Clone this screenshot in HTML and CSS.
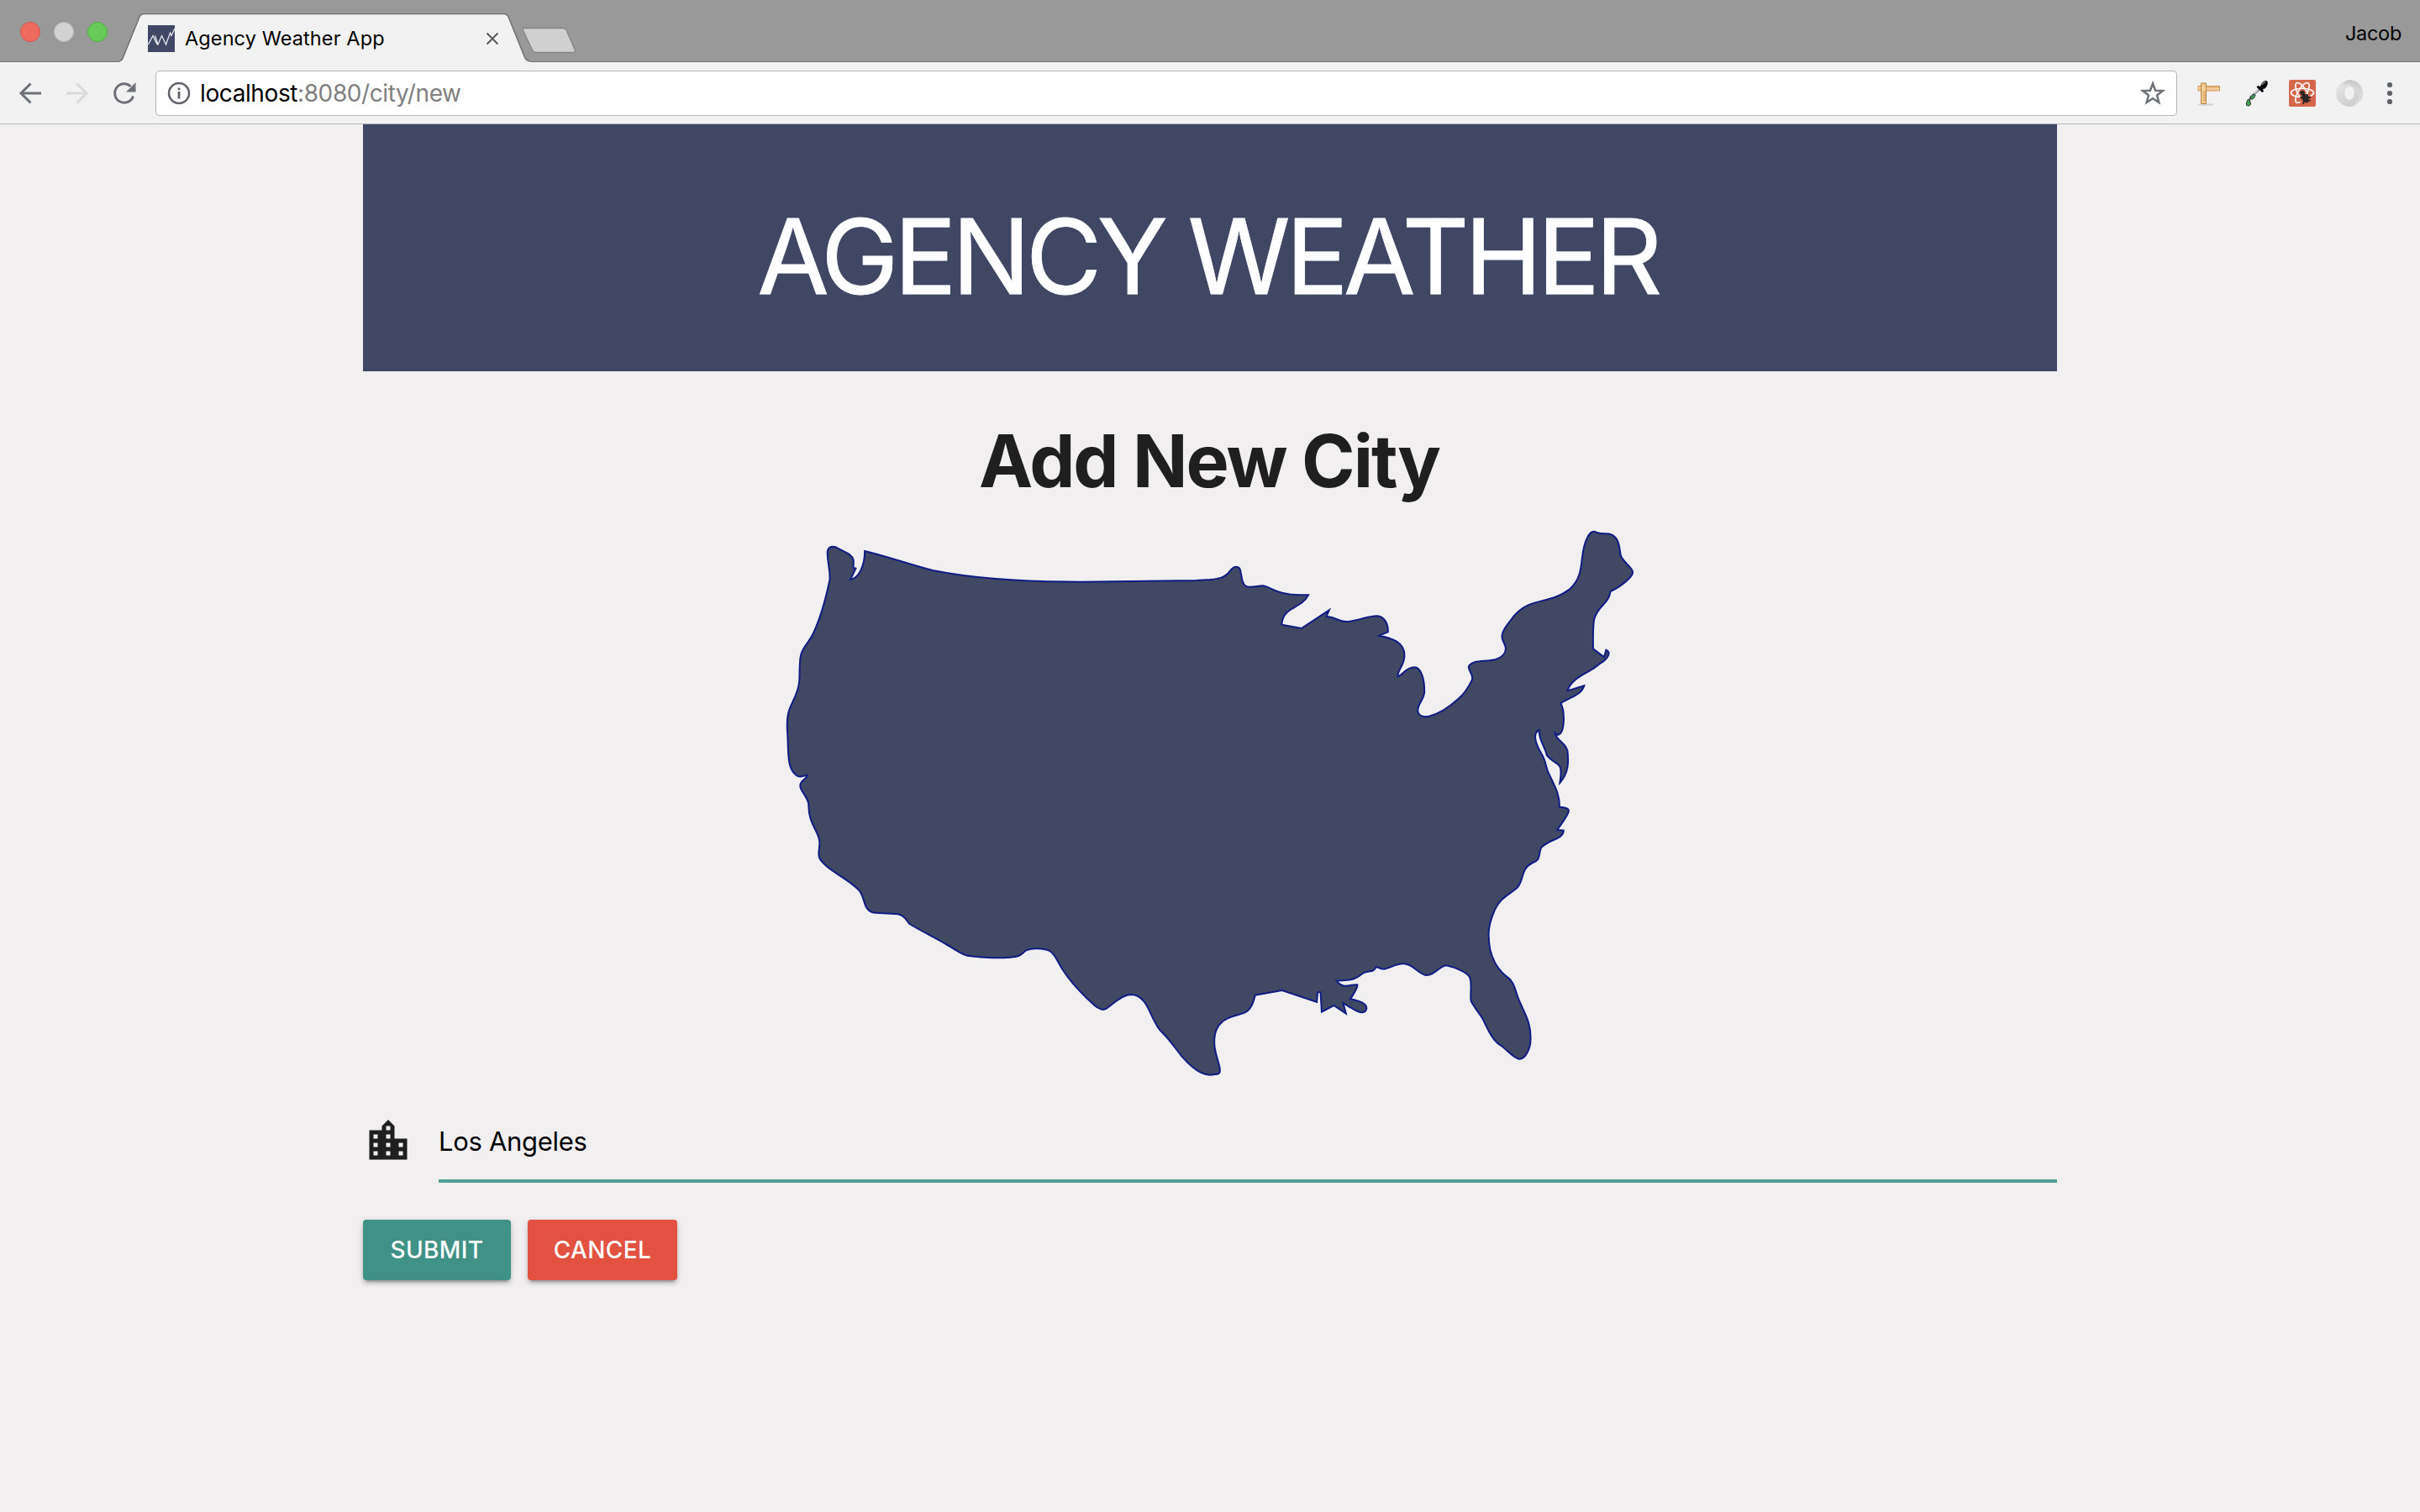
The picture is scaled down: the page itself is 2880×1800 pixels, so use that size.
FILE: index.html
```html
<!DOCTYPE html>
<html lang="en">
<head>
<meta charset="utf-8">
<title>Agency Weather App</title>
<link rel="stylesheet" href="styles.css">
</head>
<body>
<div class="tabstrip">
  <div class="lights"><i class="light red"></i><i class="light gray"></i><i class="light green"></i></div>
  <div class="tab">
    <svg class="tab-shape" viewBox="0 0 490 58"><path d="M0 57.500 C3 57 4 55 5 52 L24 4 Q26 .5 29 .5 H458 Q461 .5 463 4 L482 52 Q484 57 488 57.500 L490 58 H0Z" fill="#f2f2f2"/><path d="M0 56.500 C3 56 4 54 5 51 L24 4 Q26 .5 29 .5 H458 Q461 .5 463 4 L482 51 Q484 56 488 56.500" fill="none" stroke="#707070" stroke-width="1.500"/></svg>
    <svg class="favicon" viewBox="0 0 32 32"><path fill="#404865" d="M0 0h32v32H0z"/><path d="M.5 23 6 12.500 11 23M8.500 12.500 12 23 16.500 12.500 21.500 23 26.500 9 28 12.500 32 4" fill="none" stroke="#e6e8ee" stroke-width="1.300"/></svg>
    <span class="tab-title">Agency Weather App</span>
    <svg class="tab-close" viewBox="0 0 16 16"><path d="M1.500 1.500l13 13M14.500 1.500l-13 13" stroke="#5a5a5a" stroke-width="2"/></svg>
  </div>
  <svg class="newtab" viewBox="0 0 66 34"><path d="M3 1.500H49Q52 1.500 53 4L63 27Q64.500 30.500 61 30.500H17Q14 30.500 12.500 27.500L1.500 4Q.5 1.500 3 1.500Z" fill="#d0d0d0" stroke="#858585" stroke-width="1.300"/></svg>
  <span class="profile">Jacob</span>
</div>
<div class="toolbar">
  <svg class="nav" viewBox="0 0 28 28"><path d="M27 14H3M14.500 2.500 3 14l11.500 11.500" fill="none" stroke="#6e7278" stroke-width="3"/></svg>
  <svg class="nav" viewBox="0 0 28 28"><path d="M1 14H25M13.500 2.500 25 14 13.500 25.500" fill="none" stroke="#dadada" stroke-width="3"/></svg>
  <svg class="nav" viewBox="0 0 28 28"><path d="M24.500 17.500A11.200 11.200 0 1 1 21.500 5.800" fill="none" stroke="#6e7278" stroke-width="3"/><path d="M27.500 1v11.500H16z" fill="#6e7278"/></svg>
  <div class="address">
    <svg class="info" viewBox="0 0 28 28"><circle cx="14" cy="14" r="12" fill="none" stroke="#5f6368" stroke-width="2.500"/><path d="M14 12v8.500M14 7.500v2.800" stroke="#5f6368" stroke-width="2.800"/></svg>
    <span class="url"><b>localhost</b>:8080/city/new</span>
    <svg class="star" viewBox="0 0 30 30"><path d="M15 3.500l3.100 8.200 8.700.4-6.800 5.400 2.300 8.500L15 21.200 7.700 26l2.300-8.500-6.800-5.400 8.700-.4z" fill="none" stroke="#6e7278" stroke-width="2.500"/></svg>
  </div>
  <svg class="ext ruler" viewBox="0 0 32 32"><ellipse cx="11" cy="29.500" rx="10" ry="1.500" fill="#d6d6d6"/><path d="M2 7.500h25.500v5.500H2z" fill="#f5cf9b" stroke="#cc9352"/><path d="M5.500 4h6v24.500h-6z" fill="#f1c890" stroke="#b9803f"/><path d="M6 8.500h5v4H6z" fill="#f5cf9b"/><path d="M8 15h3M8 18h3M8 21h3M8 24h3M14 8v2M17 8v2M20 8v2M23 8v2M26 8v2" stroke="#c58a4c"/></svg>
  <svg class="ext dropper" viewBox="0 0 32 32"><path d="M17 11 7 20 4 26" stroke="#6a7079" stroke-width="2.500" fill="none"/><path d="m15.500 11.500-8 8" stroke="#e5e8ea" stroke-width="1.200"/><path d="M3.500 23Q-1 31 3.500 31T5.500 25ZM10 17q-6 5-3 6t5-5z" fill="#48a35c" stroke="#1e2b22"/><path d="M13.500 8.500 15 7l3 1q2-7 7-7 3 1 1 6-2 4-5 4l1 3-2 1z" fill="#090a0b"/><path d="M20 6q1-3 4-3" stroke="#888" fill="none" stroke-width="1.500"/></svg>
  <svg class="ext react" viewBox="0 0 32 32"><rect width="32" height="32" rx="2" fill="#d5674c"/><g fill="none" stroke="#fff" stroke-width="1.600"><ellipse cx="16" cy="15.500" rx="13.500" ry="5.200"/><ellipse cx="16" cy="15.500" rx="13.500" ry="5.200" transform="rotate(60 16 15.500)"/><ellipse cx="16" cy="15.500" rx="13.500" ry="5.200" transform="rotate(120 16 15.500)"/></g><path d="m13 21 3-3.500 8-.5 2 3v10H14z" fill="#d5674c"/><circle cx="16" cy="15.500" r="2.800" fill="#2c2524"/><ellipse cx="19.500" cy="22" rx="3.800" ry="5.800" transform="rotate(-30 19.500 22)" fill="#2c2524"/><path d="m13 21 4 1m5-5 0 3m4 1-4 0m4 4-4-1m-5 5 1-4" stroke="#2c2524" stroke-width="1.800"/></svg>
  <svg class="ext ring" viewBox="0 0 32 32"><defs><linearGradient id="a" x1="0" y1="0" x2=".6" y2="1"><stop offset="0" stop-color="#e8e8e8"/><stop offset="1" stop-color="#cecece"/></linearGradient><linearGradient id="b" x1="0" y1="0" x2="0" y2="1"><stop offset="0" stop-color="#cbcbcb"/><stop offset="1" stop-color="#e4e4e4"/></linearGradient></defs><path fill-rule="evenodd" d="M16 0A16 16 0 1 1 16 32A16 16 0 1 1 16 0ZM16 8C8 8 9 24 16 24C23 24 24 8 16 8Z" fill="url(#a)"/><path d="M16 0A16 16 0 0 1 19 31.700C27 27 29 18 26 12 22 5 15 4 8 6 10 2 13 0 16 0Z" fill="url(#b)"/></svg>
  <svg class="menu" viewBox="0 0 8 28"><g fill="#5f6368"><circle cx="4" cy="4" r="3.100"/><circle cx="4" cy="14" r="3.100"/><circle cx="4" cy="24" r="3.100"/></g></svg>
</div>
<main class="container">
  <header class="banner"><h1>AGENCY WEATHER</h1></header>
  <h2 class="heading">Add New City</h2>
  <svg class="map" viewBox="0 0 3136 2040" preserveAspectRatio="none"><path d="M375 108 C480 135 540 160 610 177 C740 204 900 218 1120 218 C1300 217 1420 215 1520 213 L1568 210 C1600 207 1615 203 1628 190 C1640 175 1646 164 1657 164 C1675 164 1672 178 1677 198 C1680 225 1690 236 1702 236 C1725 236 1740 232 1750 232 C1775 234 1800 265 1880 265 L1908 265 C1895 290 1880 297 1850 315 C1830 328 1818 340 1816 371 L1884 384 L1980 319 L1970 342 C2000 342 2010 360 2040 360 C2070 360 2110 340 2145 340 C2170 342 2184 365 2183 397 L2153 410 C2200 420 2240 435 2240 480 C2240 520 2215 530 2217 557 C2235 550 2245 523 2275 523 C2300 525 2309 570 2309 610 C2309 640 2285 650 2286 680 C2290 700 2310 701 2325 698 C2360 690 2395 665 2425 637 C2455 610 2465 585 2474 567 C2478 545 2460 540 2462 520 C2475 495 2520 505 2555 495 C2580 487 2590 470 2590 455 C2588 440 2578 430 2577 415 C2577 390 2600 365 2620 338 C2680 270 2740 300 2810 245 C2870 190 2840 120 2872 60 C2882 38 2895 34 2905 42 C2925 50 2940 42 2957 50 C2990 70 2980 110 2990 130 C3000 150 3030 170 3029 184 C3028 200 2990 235 2952 252 C2945 300 2910 300 2896 350 C2890 380 2892 430 2892 457 L2930 487 L2937 461 C2960 470 2935 500 2915 510 C2880 545 2820 555 2803 607 L2861 589 C2850 625 2810 630 2780 652 C2795 680 2795 760 2770 765 L2760 757 C2765 785 2795 790 2803 820 C2808 860 2808 900 2777 936 C2790 850 2765 880 2732 838 C2725 800 2705 790 2705 747 C2680 760 2695 800 2715 835 C2730 860 2730 890 2740 905 C2760 950 2776 975 2776 1022 C2800 1024 2810 1027 2807 1040 C2800 1060 2780 1085 2768 1104 L2790 1106 C2788 1140 2740 1135 2712 1168 C2703 1190 2710 1205 2695 1215 C2680 1222 2665 1230 2657 1245 C2645 1265 2648 1290 2630 1310 C2610 1328 2590 1338 2572 1358 C2545 1390 2530 1450 2531 1480 C2531 1540 2550 1590 2590 1625 C2620 1645 2620 1670 2635 1710 C2655 1760 2677 1790 2676 1850 C2676 1890 2655 1922 2638 1922 C2620 1922 2600 1895 2575 1875 C2545 1860 2525 1810 2510 1778 C2495 1755 2480 1735 2470 1715 C2466 1690 2475 1650 2465 1630 C2455 1610 2410 1594 2385 1588 C2360 1590 2345 1623 2318 1623 C2290 1623 2270 1580 2235 1582 C2210 1582 2185 1600 2170 1601 C2155 1601 2148 1594 2142 1593 C2135 1615 2115 1605 2098 1615 C2070 1638 2065 1640 2005 1643 C2030 1675 2050 1655 2077 1657 C2080 1670 2060 1695 2053 1708 C2090 1715 2110 1725 2109 1742 C2105 1765 2080 1755 2060 1742 C2045 1735 2038 1728 2028 1722 L2038 1760 L1996 1731 L1954 1754 L1950 1684 L1940 1684 L1937 1719 L1817 1677 L1724 1694 C1718 1720 1710 1750 1680 1760 C1650 1770 1620 1775 1605 1795 C1580 1820 1580 1865 1587 1895 C1592 1925 1615 1975 1593 1976 L1568 1979 C1540 1979 1510 1960 1470 1912 C1445 1880 1430 1855 1405 1830 C1360 1790 1360 1695 1295 1692 C1260 1692 1225 1735 1208 1743 C1195 1752 1180 1740 1170 1732 C1130 1695 1085 1645 1060 1605 C1040 1575 1033 1542 1005 1532 C980 1527 950 1527 935 1533 C920 1540 920 1555 890 1558 C850 1564 780 1560 740 1555 C710 1553 690 1530 655 1512 C610 1485 570 1465 530 1440 C520 1430 515 1410 490 1405 C450 1400 420 1403 400 1398 C370 1388 377 1350 357 1322 C330 1290 280 1265 245 1235 C205 1200 217 1195 219 1150 C219 1110 180 1085 181 1015 C180 985 150 965 152 945 C152 925 175 925 175 908 C150 915 150 915 140 910 C105 885 112 830 108 760 C106 735 106 710 110 690 C118 650 145 625 149 570 C151 520 148 490 157 470 C170 440 185 430 197 402 C225 340 240 280 254 210 C256 170 245 150 246 110 C250 92 260 90 275 94 C290 103 310 112 322 120 C345 140 333 150 336 168 L344 170 L325 210 C355 205 375 160 375 108 Z"/></svg>
  <form class="form">
    <div class="field">
      <svg class="city-icon" viewBox="0 0 24 24"><path d="M15 11V5l-3-3-3 3v2H3v14h18V11h-6zm-8 8H5v-2h2v2zm0-4H5v-2h2v2zm0-4H5V9h2v2zm6 8h-2v-2h2v2zm0-4h-2v-2h2v2zm0-4h-2V9h2v2zm0-4h-2V5h2v2zm6 12h-2v-2h2v2zm0-4h-2v-2h2v2z"/></svg>
      <div class="input">Los Angeles</div>
    </div>
    <div class="actions">
      <button type="button" class="btn submit">SUBMIT</button>
      <button type="button" class="btn cancel">CANCEL</button>
    </div>
  </form>
</main>
</body>
</html>
```
FILE: styles.css
```css
* { box-sizing: border-box; }
body { margin: 0; width: 2880px; height: 1800px; overflow: hidden; background: #f1eff0; font-family: Inter, "Liberation Sans", sans-serif; color: #1f1f1f; }
svg { display: block; flex: none; }
.tabstrip { display: flex; height: 74px; background: #999; border-bottom: 1px solid #707070; }
.lights { display: flex; gap: 16px; padding: 26px 0 0 24px; width: 142px; }
.light { width: 24px; height: 24px; border-radius: 50%; border: 1px solid; }
.red { background: #ef6b5f; border-color: #d9544a; }
.gray { background: #d2d2d2; border-color: #bdbdbd; }
.green { background: #66cb57; border-color: #4fae42; }
.tab { position: relative; display: flex; width: 490px; height: 58px; margin-top: 16px; padding-left: 34px; }
.tab-shape { position: absolute; left: 0; top: 0; width: 490px; height: 58px; }
.favicon { position: relative; width: 32px; height: 32px; margin-top: 14px; }
.tab-title { position: relative; width: 358px; margin-left: 12px; font-size: 23.500px; letter-spacing: .1px; line-height: 60px; color: #000; white-space: nowrap; }
.tab-close { position: relative; width: 16px; height: 16px; margin-top: 22px; }
.newtab { width: 66px; height: 34px; margin: 32px 0 0 -11px; }
.profile { margin-left: auto; margin-right: 22px; font-size: 23.500px; letter-spacing: -.3px; line-height: 80px; color: #000; }
.toolbar { display: flex; align-items: center; height: 74px; background: #f2f2f2; border-bottom: 1px solid #b5b5b5; padding-left: 22px; }
.nav { width: 28px; height: 28px; margin-right: 28px; }
.address { display: flex; align-items: center; width: 2406px; height: 54px; margin-left: -5px; background: #fff; border: 1px solid #b5b5b5; border-radius: 5px; padding: 0 13px; }
.info { width: 28px; height: 28px; }
.url { flex: 1; margin-left: 11px; font-size: 28px; letter-spacing: -.4px; color: #808080; }
.url b { font-weight: 400; color: #000; }
.star { width: 30px; height: 30px; }
.ext { width: 32px; height: 32px; }
.ruler { margin-left: 23px; }
.dropper { margin-left: 26px; }
.react { margin-left: 20px; }
.ring { margin-left: 24px; }
.menu { width: 8px; height: 28px; margin-left: 28px; }
.container { width: 2016px; margin: 0 auto; }
.banner { height: 294px; padding: 20px 6px 0 0; background: #404764; color: #fff; text-align: center; }
.banner h1 { margin: 0; font-size: 124px; font-weight: 430; letter-spacing: -5.600px; line-height: 274px; -webkit-text-stroke: .8px #fff; }
.heading { margin: 0; padding: 36px 2px 0 0; font-size: 86px; font-weight: 700; letter-spacing: -2px; line-height: 142px; text-align: center; }
.map { width: 1080px; height: 680px; margin: 0 auto; }
.map path { fill: #404864; stroke: #101c86; stroke-width: 2px; vector-effect: non-scaling-stroke; }
.form { padding-top: 13px; }
.field { display: flex; gap: 30px; }
.city-icon { width: 60px; height: 60px; margin-top: 15px; fill: #1f1f1f; }
.input { flex: 1; height: 95px; border-bottom: 4px solid #4da197; font-size: 31px; letter-spacing: -.3px; line-height: 91px; color: #000; }
.actions { display: flex; gap: 20px; margin-top: 44px; }
.btn { height: 72px; padding: 0; border: 0; border-radius: 4px; color: #fff; font: 500 28px Inter, "Liberation Sans", sans-serif; letter-spacing: .35px; box-shadow: 0 4px 4px rgba(0,0,0,.14), 0 2px 10px rgba(0,0,0,.12), 0 6px 2px -4px rgba(0,0,0,.2); }
.submit { width: 176px; background: #409287; }
.cancel { width: 178px; background: #e35141; }
```
